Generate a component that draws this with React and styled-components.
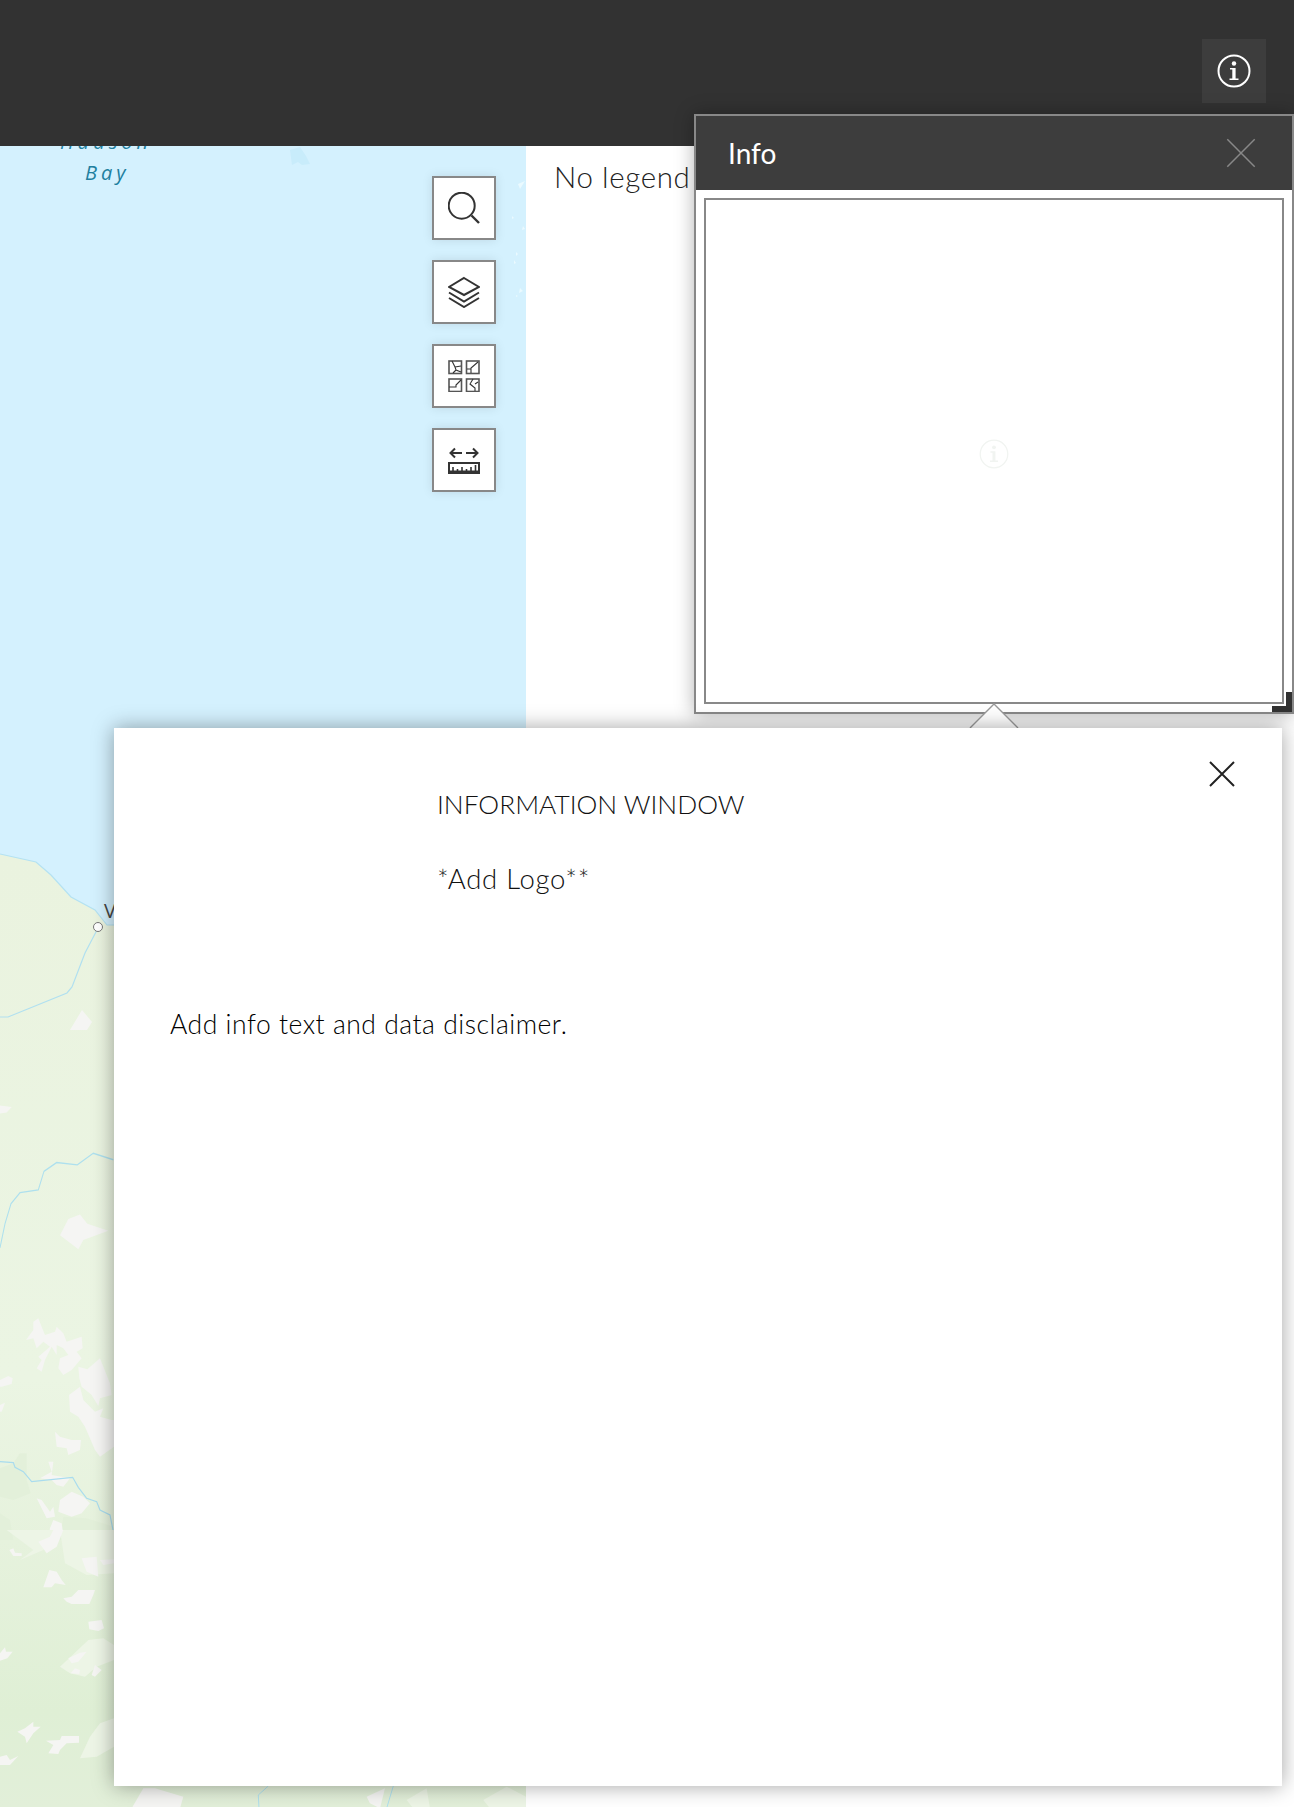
import React from "react";
import styled, { createGlobalStyle } from "styled-components";

const Global = createGlobalStyle`
  html, body { margin: 0; padding: 0; background: #fff; }
  * { box-sizing: border-box; }
`;

const Page = styled.div`
  position: relative;
  width: 1294px;
  height: 1807px;
  overflow: hidden;
  background: #fff;
  font-family: "Lato", "Liberation Sans", sans-serif;
  color: #1f1f1f;
`;

const Header = styled.header`
  height: 146px;
  background: #323232;
  display: flex;
  justify-content: flex-end;
  align-items: flex-start;
  padding: 39px 28px 0 0;
`;

const HeaderButton = styled.button`
  width: 64px;
  height: 64px;
  padding: 0;
  border: 0;
  background: #3d3d3d;
  display: flex;
  align-items: center;
  justify-content: center;
`;

const Main = styled.main`
  display: grid;
  grid-template-columns: 526px 1fr;
  height: 1661px;
`;

const MapPane = styled.section`
  position: relative;
  overflow: hidden;
  background: #d4f1fe;
  display: flex;
  justify-content: flex-end;
  padding: 30px;
`;

const MapArt = styled.svg`
  position: absolute;
  inset: 0;
  width: 526px;
  height: 1661px;
`;

const Toolbar = styled.div`
  position: relative;
  display: flex;
  flex-direction: column;
  gap: 20px;
`;

const ToolButton = styled.button`
  width: 64px;
  height: 64px;
  padding: 0;
  background: #fff;
  border: 2px solid #888;
  box-shadow: 0 0 10px rgba(0, 0, 0, 0.1);
  display: flex;
  align-items: center;
  justify-content: center;
`;

const LegendPane = styled.aside`
  padding: 12px 0 0 28px;
  background: #fff;
`;

const LegendText = styled.p`
  margin: 0;
  font-size: 29.5px;
  line-height: 38px;
  font-weight: 300;
  letter-spacing: 0.6px;
  color: #222;
  white-space: nowrap;
`;

const InfoPanel = styled.div`
  position: absolute;
  left: 694px;
  top: 114px;
  width: 600px;
  height: 600px;
  background: #fff;
  border: 2px solid #888;
  box-shadow: 0 0 18px rgba(0, 0, 0, 0.3);
  display: flex;
  flex-direction: column;
`;

const PanelHeader = styled.div`
  height: 74px;
  flex: none;
  background: #3d3d3d;
  display: flex;
  align-items: center;
  justify-content: space-between;
  padding: 0 35px 0 32px;
`;

const PanelTitle = styled.h2`
  margin: 0;
  font-size: 28px;
  font-weight: 400;
  color: #fff;
`;

const PanelBody = styled.div`
  flex: 1;
  padding: 8px;
  display: flex;
`;

const Frame = styled.div`
  flex: 1;
  border: 2px solid #888;
  padding-top: 6px;
  display: flex;
  align-items: center;
  justify-content: center;
  background: #fff;
`;

const ResizeGrip = styled.div`
  position: absolute;
  right: 0;
  bottom: 0;
  width: 20px;
  height: 20px;
  border-right: 6px solid #323232;
  border-bottom: 6px solid #323232;
`;

const Pointer = styled.svg`
  position: absolute;
  left: 273px;
  top: 586px;
  width: 50px;
  height: 26px;
  overflow: visible;
`;

const Modal = styled.div`
  position: absolute;
  left: 114px;
  top: 728px;
  width: 1168px;
  height: 1058px;
  background: #fff;
  box-shadow: 0 0 20px rgba(0, 0, 0, 0.36);
  padding: 58px 56px 0;
`;

const ModalClose = styled.button`
  position: absolute;
  top: 32px;
  right: 46px;
  width: 28px;
  height: 28px;
  padding: 0;
  border: 0;
  background: none;
  display: flex;
`;

const BrandBlock = styled.div`
  margin-left: 267px;
`;

const Heading = styled.h1`
  margin: 0;
  font-size: 26.3px;
  line-height: 36px;
  font-weight: 300;
  color: #111;
`;

const LogoNote = styled.p`
  margin: 39px 0 0;
  font-size: 27.5px;
  line-height: 36px;
  font-weight: 300;
  letter-spacing: 0.7px;
  color: #111;
`;

const Disclaimer = styled.p`
  margin: 109px 0 0;
  font-size: 26.5px;
  line-height: 36px;
  font-weight: 300;
  letter-spacing: 0.52px;
  color: #000;
`;

const InfoIcon = ({ size = 36, color = "#fff", sw = 2 }) => (
  <svg width={size} height={size} viewBox="0 0 36 36" fill="none">
    <circle cx="18" cy="18" r="15.5" stroke={color} strokeWidth={sw} />
    <circle cx="18" cy="10.500" r="2.2" fill={color} />
    <path d="M14 15h5.600v10.400H22.500v1.600H13.500v-1.600h2.800v-8.800H14z" fill={color} />
  </svg>
);

const CloseIcon = ({ size, color, sw }) => (
  <svg width={size} height={size} viewBox="0 0 28 28" fill="none">
    <path d="M2 2l24 24M26 2L2 26" stroke={color} strokeWidth={sw} />
  </svg>
);

const SearchIcon = () => (
  <svg width="32" height="32" viewBox="0 0 32 32" fill="none" stroke="#333" strokeWidth="2">
    <circle cx="13.700" cy="13.700" r="13" />
    <path d="M23.500 23.500L31 31" strokeWidth="2.400" />
  </svg>
);

const LayersIcon = () => (
  <svg width="32" height="32" viewBox="0 0 32 32" fill="none" stroke="#333" strokeWidth="2">
    <path d="M16 2l15 9-15 8L1 11z" />
    <path d="M1 16.500l15 9 15-9" />
    <path d="M1 22l15 9 15-9" />
  </svg>
);

const BasemapIcon = () => (
  <svg width="32" height="32" viewBox="0 0 32 32" fill="none" stroke="#555" strokeWidth="1.600">
    <rect x="1" y="1" width="12.500" height="12.500" />
    <rect x="18.500" y="1" width="12.500" height="12.500" />
    <rect x="1" y="19" width="12.500" height="12.500" />
    <rect x="18.500" y="19" width="12.500" height="12.500" />
    <path d="M4 1l3 6 1 3 5 2M7 7l6-1M5 13l3-3" strokeWidth="1.100" stroke="#333" />
    <path d="M30 2l-7 6v1h-4M23 9v4" strokeWidth="1.100" stroke="#333" />
    <path d="M13 20l-5 5v2H1" strokeWidth="1.100" stroke="#333" />
    <path d="M25 19l-3 5 5 4v3M27 24l3-2" strokeWidth="1.100" stroke="#333" />
  </svg>
);

const MeasureIcon = () => (
  <svg width="32" height="32" viewBox="0 0 32 32" fill="none" stroke="#333">
    <path d="M14 9H3M7 4.500L2.500 9 7 13.500M18 9h11M25 4.500L29.500 9 25 13.500" strokeWidth="2" />
    <rect x="0" y="18" width="32" height="12" fill="#333" stroke="none" />
    <rect x="2" y="20" width="28" height="6.500" fill="#fff" stroke="none" />
    <path d="M5 23v5M9.500 25v3M14 23v5M18.500 25v3M23 23v5M27.500 21v7" strokeWidth="1.600" />
  </svg>
);

const ice = "#f5f5f3";
const soft = "#edf5e6";

const upperIce = [
  "0,55 35,58 20,70 0,72",
  "180,335 205,300 240,290 262,310 325,325 250,345 235,365",
];

const midIce = [
  "78,180 100,150 100,125 115,115 125,140 135,165 165,155 170,140 190,160 200,185 245,170 248,205 230,215 245,235 215,270 190,285 175,265 180,235 205,225 190,205 170,195 170,225 155,200 135,240 125,275 110,265 125,240 115,230 150,200 130,185 110,205 100,175",
  "235,260 262,268 300,235 310,260 330,310 335,345 300,355 295,378 275,345 245,320 238,295",
  "207,345 240,320 250,360 285,395 310,385 300,410 335,420 342,420 342,500 300,530 285,510 255,440 235,410 210,395",
  "165,455 180,470 215,480 243,480 240,510 205,525 200,505 170,500",
  "0,300 25,288 38,295 35,312 5,320 0,320",
  "0,375 15,368 5,395 0,395",
  "120,595 155,575 145,545 160,545 155,585 210,595 190,620 170,615 155,600",
  "180,660 215,635 250,650 270,670 245,700 215,710 175,695",
  "110,655 125,660 150,695 160,680 165,710 140,715",
  "160,720 185,730 190,765 145,775 150,745",
];

const midDark = [
  "0,565 40,550 60,520 80,520 80,600 92,640 40,660 0,650",
  "0,700 30,720 40,780 0,780",
  "190,710 260,715 340,740 342,780 180,780",
];

const lowSoft = [
  "20,0 160,0 130,60 60,90 100,60 60,30",
  "180,0 342,0 342,130 260,135 195,100",
  "180,410 265,330 310,325 342,345 342,390 290,410 255,440 210,430",
  "240,685 270,620 300,580 342,565 342,650 290,680",
];

const lowIce = [
  "28,60 40,55 45,68 65,70 65,78 40,78",
  "115,35 150,20 165,0 190,0 170,50 140,70",
  "130,172 148,120 170,125 185,150 197,165 165,160 155,172",
  "190,205 215,200 235,180 285,180 280,195 268,222 215,222 200,215",
  "265,275 305,270 312,295 295,303 268,298",
  "245,85 290,80 295,140 260,125",
  "300,90 342,88 342,100 310,105",
  "0,370 15,352 18,365 38,365 22,385 0,392",
  "205,385 240,368 260,365 235,395 215,400",
  "212,430 225,415 240,420 238,432",
  "275,435 285,405 305,420 285,440",
  "52,605 75,595 100,575 100,590 122,590 100,610 80,640 75,620",
  "138,632 180,630 185,618 237,618 237,638 200,640 180,660 175,672 145,670 160,645",
  "0,680 20,675 30,690 55,678 30,705 0,705",
];

const MapDrawing = () => (
  <MapArt viewBox="0 146 526 1661">
    <defs>
      <linearGradient id="land" gradientUnits="userSpaceOnUse" x1="0" y1="854" x2="0" y2="1807">
        <stop offset="0" stopColor="#eaf3df" />
        <stop offset="0.55" stopColor="#ebf5e3" />
        <stop offset="0.72" stopColor="#e6f2dd" />
        <stop offset="0.9" stopColor="#dfefd5" />
        <stop offset="1" stopColor="#e2efd9" />
      </linearGradient>
    </defs>
    <path
      d="M0 854L36 862 51 875 71 897 95 910 107 925 526 925V1807H0Z"
      fill="url(#land)"
    />
    <path d="M0 854L36 862 51 875 71 897 95 910 107 925H130" fill="none" stroke="#b4e2f2" strokeWidth="1.200" />
    <path d="M290 150l10-3 6 9 4 8-8 1-4-3-6 3z" fill="#c8ecfb" />
    <path d="M518 184l7-3-5 8zM512 216l2 2-2 1zM523 226l2 3-3 1zM516 252l2 2-2 2zM514 260l2 3-2 1zM520 288l3 3-4 2zM516 295l2 1-2 1z" fill="#eafaff" />
    <path d="M70 1030l12-20 10 12-5 8z" fill={ice} />
    <path d="M97 930L85 953 72 987 67 993 8 1017H0" fill="none" stroke="#b1e0f0" strokeWidth="1.200" />
    <circle cx="98" cy="927" r="4.500" fill="#fff" stroke="#777" strokeWidth="1" />
    <text x="104" y="918" fontFamily="Open Sans, sans-serif" fontSize="20" fill="#444">V</text>
    <text x="60" y="149" fontFamily="Open Sans, sans-serif" fontStyle="italic" fontSize="20" letterSpacing="4" fill="#217f9f">Hudson</text>
    <text x="85" y="180" fontFamily="Open Sans, sans-serif" fontStyle="italic" fontSize="20" letterSpacing="4" fill="#217f9f">Bay</text>
    <g transform="translate(0 1080) scale(.3333 .4636)">
      {upperIce.map((p) => <polygon key={p} points={p} fill={ice} />)}
      <path d="M340 172L280 158 232 183 170 178 132 197 115 237 60 243 33 267 15 310 0 362" fill="none" stroke="#aee0ee" strokeWidth="3" />
    </g>
    <g transform="translate(0 1280) scale(.3333)">
      {midDark.map((p) => <polygon key={p} points={p} fill="#e3f0da" />)}
      {midIce.map((p) => <polygon key={p} points={p} fill={ice} />)}
      <path d="M0 545L40 548 45 562 70 575 95 605 218 592 235 622 260 655 290 665 300 690 330 705 340 755" fill="none" stroke="#a9dcee" strokeWidth="3.500" />
    </g>
    <g transform="translate(0 1530) scale(.3333)">
      {lowSoft.map((p) => <polygon key={p} points={p} fill={soft} />)}
      {lowIce.map((p) => <polygon key={p} points={p} fill={ice} />)}
    </g>
    <g transform="translate(60 1700) scale(.3333)">
      <polygon points="215,325 250,265 285,265 370,290 360,325" fill={ice} />
      <polygon points="920,290 975,265 960,325 930,310" fill={ice} />
      <polygon points="1040,300 1100,265 1110,325 1060,325" fill={soft} />
      <polygon points="1270,300 1340,260 1398,290 1398,325 1290,325" fill={soft} />
      <path d="M625 258L595 285 597 325M1000 258L980 325" fill="none" stroke="#aee0ee" strokeWidth="3" />
    </g>
  </MapArt>
);

export default function App() {
  return (
    <Page>
      <Global />
      <Header>
        <HeaderButton aria-label="Info">
          <InfoIcon />
        </HeaderButton>
      </Header>
      <Main>
        <MapPane>
          <MapDrawing />
          <Toolbar>
            <ToolButton aria-label="Search"><SearchIcon /></ToolButton>
            <ToolButton aria-label="Layers"><LayersIcon /></ToolButton>
            <ToolButton aria-label="Basemap"><BasemapIcon /></ToolButton>
            <ToolButton aria-label="Measure"><MeasureIcon /></ToolButton>
          </Toolbar>
        </MapPane>
        <LegendPane>
          <LegendText>No legend</LegendText>
        </LegendPane>
      </Main>
      <InfoPanel>
        <PanelHeader>
          <PanelTitle>Info</PanelTitle>
          <CloseIcon size={32} color="#888" sw={1.300} />
        </PanelHeader>
        <PanelBody>
          <Frame>
            <InfoIcon size={32} color="#f1f4f1" sw={1.400} />
          </Frame>
        </PanelBody>
        <ResizeGrip />
        <Pointer viewBox="0 0 50 26">
          <path d="M1 26L25 2l24 24" fill="#fff" stroke="#999" strokeWidth="1.400" />
        </Pointer>
      </InfoPanel>
      <Modal>
        <ModalClose aria-label="Close">
          <CloseIcon size={28} color="#222" sw={2} />
        </ModalClose>
        <BrandBlock>
          <Heading>INFORMATION WINDOW</Heading>
          <LogoNote>*Add Logo**</LogoNote>
        </BrandBlock>
        <Disclaimer>Add info text and data disclaimer.</Disclaimer>
      </Modal>
    </Page>
  );
}
